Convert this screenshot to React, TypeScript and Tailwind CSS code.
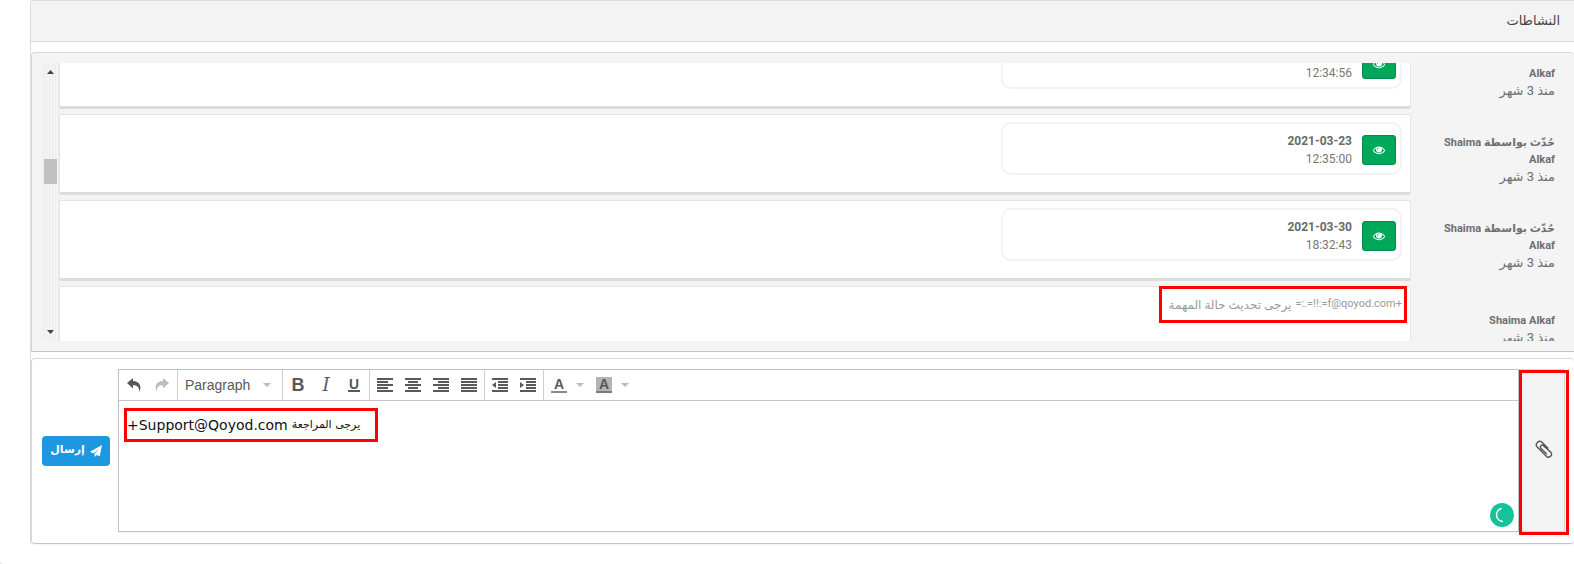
import type { ReactNode } from "react";
import clsx from "clsx";

type Activity = {
  id: number;
  author: string;
  date: string;
  time: string;
};

const activities: Activity[] = [
  { id: 1, author: "حُدّث بواسطة Shaima Alkaf", date: "2021-03-23", time: "12:34:56" },
  { id: 2, author: "حُدّث بواسطة Shaima Alkaf", date: "2021-03-23", time: "12:35:00" },
  { id: 3, author: "حُدّث بواسطة Shaima Alkaf", date: "2021-03-30", time: "18:32:43" },
];

function EyeIcon() {
  return (
    <svg viewBox="0 0 1792 1792" className="size-3 fill-current">
      <path d="M1664 960q-152-236-381-353 61 104 61 225 0 185-131.5 316.5t-316.5 131.5-316.5-131.5-131.5-316.5q0-121 61-225-229 117-381 353 133 205 333.5 326.5t434.5 121.5 434.5-121.5 333.5-326.5zm-720-384q0-20-14-34t-34-14q-125 0-214.5 89.5t-89.5 214.5q0 20 14 34t34 14 34-14 14-34q0-86 61-147t147-61q20 0 34-14t14-34zm848 384q0 34-20 69-140 230-376.5 368.5t-499.5 138.5-499.5-139-376.5-368q-20-35-20-69t20-69q140-229 376.5-368t499.5-139 499.5 139 376.5 368q20 35 20 69z" />
    </svg>
  );
}

function Author({ name }: { name: string }) {
  return (
    <div className="w-36 shrink-0 pt-[10px] pl-5 text-[#6f6f6f]">
      <p className="text-[11px] leading-[17px] font-bold">{name}</p>
      <p className="text-[13px] leading-[17px]">منذ 3 شهر</p>
    </div>
  );
}

function ActivityRow({ item }: { item: Activity }) {
  return (
    <li className="flex items-center">
      <Author name={item.author} />
      <div className="h-[81px] flex-1 rounded-xs border border-b-3 border-[#e4e4e4] border-b-[#dcdcdc] bg-white px-2 pt-[7px]">
        <div className="flex h-[53px] w-[401px] items-center gap-[10px] rounded-[10px] border-2 border-[#f3f3f3] px-1 pt-[2px]">
          <button
            aria-label="عرض"
            className="flex h-[30px] w-[34px] items-center justify-center rounded-[3px] border border-[#008d4c] bg-[#00a65a] text-white"
          >
            <EyeIcon />
          </button>
          <div className="text-xs leading-[18px] text-[#777]">
            <p className="font-bold text-[#6a6a6a]">{item.date}</p>
            <p>{item.time}</p>
          </div>
        </div>
      </div>
    </li>
  );
}

function ScrollTrack() {
  return (
    <div className="flex w-4 shrink-0 flex-col items-center justify-between bg-[repeating-linear-gradient(90deg,#ececec_0px,#ececec_1px,#f4f4f4_1px,#f4f4f4_3px)] py-[7px] pr-px">
      <svg viewBox="0 0 7 4" className="h-1 w-[7px] fill-[#444]">
        <path d="M0 4L3.5 0L7 4Z" />
      </svg>
      <div className="mb-[61px] h-[25px] w-[13px] bg-[#c1c1c1]" />
      <svg viewBox="0 0 7 4" className="h-1 w-[7px] fill-[#444]">
        <path d="M0 0L3.5 4L7 0Z" />
      </svg>
    </div>
  );
}

function Group({ children, last }: { children: ReactNode; last?: boolean }) {
  return <div className={clsx("flex items-center px-px", !last && "border-r border-[#d0d0d0]")}>{children}</div>;
}

function Tool({ label, children }: { label: string; children: ReactNode }) {
  return (
    <button aria-label={label} className="flex h-7 w-7 items-center justify-center text-[#595959]">
      {children}
    </button>
  );
}

function HistoryArrow({ className }: { className?: string }) {
  return (
    <svg viewBox="0 0 14 14" className={clsx("size-[14px] fill-current", className)}>
      <path d="M0 5L6 0V3C11.5 3 15.5 7.5 12.2 14C12.4 9.2 10.5 7.3 6 7.3V10.5Z" />
    </svg>
  );
}

function Caret() {
  return (
    <svg viewBox="0 0 8 4" className="h-1 w-2 fill-[#b5bcc2]">
      <path d="M0 0H8L4 4Z" />
    </svg>
  );
}

// every bar is [x, width] on a 16px wide icon
function Bars({ rows, arrow }: { rows: number[][]; arrow?: string }) {
  return (
    <svg viewBox="0 0 16 14" className="h-[14px] w-4 fill-[#595959]">
      {rows.map(([x, width], i) => (
        <rect key={i} x={x} y={i * 3} width={width} height={2} />
      ))}
      {arrow ? <path d={arrow} /> : null}
    </svg>
  );
}

const alignments = [
  { label: "Align left", rows: [[0, 16], [0, 11], [0, 16], [0, 11], [0, 16]] },
  { label: "Align center", rows: [[0, 16], [3, 10], [0, 16], [3, 10], [0, 16]] },
  { label: "Align right", rows: [[0, 16], [5, 11], [0, 16], [5, 11], [0, 16]] },
  { label: "Justify", rows: [[0, 16], [0, 16], [0, 16], [0, 16], [0, 16]] },
];

const indentRows = [[0, 16], [6, 10], [6, 10], [6, 10], [0, 16]];

function Toolbar() {
  return (
    <div className="flex h-[31px] border-b border-[#c5c5c5] font-['Liberation_Sans',sans-serif]">
      <Group>
        <Tool label="Undo">
          <HistoryArrow />
        </Tool>
        <Tool label="Redo">
          <HistoryArrow className="-scale-x-100 text-[#bdbdbd]" />
        </Tool>
      </Group>
      <div className="relative flex w-[105px] items-center border-r border-[#d0d0d0]">
        <select aria-label="Block format" className="w-full appearance-none bg-transparent pl-[7px] text-sm text-[#595959]">
          <option>Paragraph</option>
        </select>
        <span className="pointer-events-none absolute right-[11px]">
          <Caret />
        </span>
      </div>
      <Group>
        <Tool label="Bold">
          <span className="text-lg font-bold">B</span>
        </Tool>
        <Tool label="Italic">
          <span className="font-['DejaVu_Serif',serif] text-lg italic">I</span>
        </Tool>
        <Tool label="Underline">
          <span className="border-b-2 border-[#595959] px-px text-sm leading-3 font-bold">U</span>
        </Tool>
      </Group>
      <Group>
        {alignments.map((a) => (
          <Tool key={a.label} label={a.label}>
            <Bars rows={a.rows} />
          </Tool>
        ))}
      </Group>
      <Group>
        <Tool label="Decrease indent">
          <Bars rows={indentRows} arrow="M4 4V10L0 7Z" />
        </Tool>
        <Tool label="Increase indent">
          <Bars rows={indentRows} arrow="M0 4V10L4 7Z" />
        </Tool>
      </Group>
      <Group last>
        <Tool label="Text color">
          <span className="w-4 border-b-2 border-[#8a8a8a] text-sm leading-[14px] font-bold">A</span>
        </Tool>
        <button aria-label="Text color options" className="flex w-[17px] pl-[3px]">
          <Caret />
        </button>
        <Tool label="Background color">
          <span className="w-4 border-b-2 border-[#7b7b7b] bg-[#b5b5b5] text-sm leading-[14px] font-bold">A</span>
        </Tool>
        <button aria-label="Background color options" className="flex w-[17px] pl-[3px]">
          <Caret />
        </button>
      </Group>
    </div>
  );
}

export default function App() {
  return (
    <div className="bg-[#e5e5e5]">
      <div
        dir="rtl"
        className="min-h-screen overflow-hidden rounded-bl-[4px] bg-white pl-[30px] font-[Roboto,'DejaVu_Sans',sans-serif]"
      >
        <section className="rounded-tl-[3px] border-t border-l border-[#dcdcdc]">
          <h1 className="flex h-[41px] items-center border-b border-[#dcdcdc] bg-[#f3f3f3] pr-[14px] text-[13px] text-[#444]">
            النشاطات
          </h1>

          <div className="mt-[10px] rounded-t-[4px] border border-r-0 border-[#d8d8d8] border-b-[#c4c4c4] bg-[#f4f4f4] py-[10px] pl-[11px]">
            <div className="flex h-[278px] overflow-hidden">
              <ul className="-mt-[35px] flex flex-1 flex-col gap-[5px] pr-[19px]">
                {activities.map((item) => (
                  <ActivityRow key={item.id} item={item} />
                ))}
                <li className="flex items-center">
                  <Author name="Shaima Alkaf" />
                  <div className="h-[76px] flex-1 rounded-xs border border-[#e4e4e4] bg-white pr-[3px]">
                    <p className="-mt-px flex h-[37px] w-[248px] items-center gap-1 border-3 border-[#f00] pr-[2px] whitespace-nowrap text-[#9a9a9a]">
                      <bdi dir="ltr" className="text-[11px]">=:.=!!:=f@qoyod.com+</bdi>
                      <span className="text-xs">يرجى تحديث حالة المهمة</span>
                    </p>
                  </div>
                </li>
              </ul>
              <ScrollTrack />
            </div>
          </div>

          <form
            onSubmit={(event) => event.preventDefault()}
            className="mt-[6px] flex rounded-[4px] border border-r-0 border-[#d8d8d8] border-b-[#c4c4c4] pt-[10px] pr-[9px] pb-[11px] pl-[10px] shadow-xs"
          >
            <button
              type="button"
              aria-label="إرفاق ملف"
              className="relative flex w-[46px] items-center justify-center border border-[#cfd4d8] bg-[#f3f3f3] pb-1 pl-1 text-[#555]"
            >
              <svg viewBox="0 0 16 16" className="size-[18px] fill-none stroke-current stroke-[1.2]">
                <path d="M11.8 7.6L6.4 2.2A3 3 0 0 0 2.1 6.4L9.9 14.2A2.4 2.4 0 0 0 14 10.8L7.6 5A1.7 1.7 0 0 0 5.2 7.4L10.4 12.4" />
              </svg>
              <span className="pointer-events-none absolute top-0 -right-[5px] -bottom-1 -left-px border-3 border-[#f00]" />
            </button>

            <div dir="ltr" className="relative h-[163px] flex-1 border border-[#c0c0c0] shadow-xs">
              <Toolbar />
              <div
                contentEditable
                suppressContentEditableWarning
                role="textbox"
                aria-label="Comment"
                className="mt-[7px] ml-[5px] flex h-[34px] w-[254px] items-center gap-1 border-3 border-[#f00] font-['DejaVu_Sans',sans-serif] text-sm text-[#111] outline-none"
              >
                <span>+Support@Qoyod.com</span>
                <span dir="rtl" className="text-[11px]">يرجى المراجعة</span>
              </div>
              <svg viewBox="0 0 24 24" className="absolute right-1 bottom-1 size-6">
                <circle cx="12" cy="12" r="12" fill="#15c39a" />
                <path d="M11.5 5.5A6.6 6.6 0 0 0 13 18.5" fill="none" stroke="#fff" strokeWidth="1.5" />
              </svg>
            </div>

            <button
              type="submit"
              className="mr-2 flex h-[30px] w-[68px] items-center justify-center gap-[5px] self-center rounded-[4px] bg-[#1c97e0] text-[11px] font-bold text-white"
            >
              <svg viewBox="0 0 16 16" className="size-3 fill-current">
                <path d="M16 0L0 9L4.8 11.2L13 4L6.2 11.8V16L9 13.2L13 15Z" />
              </svg>
              إرسال
            </button>
          </form>
        </section>
      </div>
    </div>
  );
}
